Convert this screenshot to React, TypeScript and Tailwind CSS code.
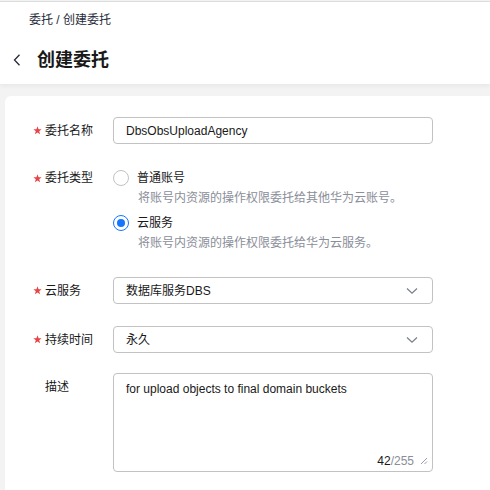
import React from "react";

const font = { fontFamily: '"Liberation Sans", "Noto Sans CJK SC", sans-serif' };

// required mark, drawn as a small red star
const Star = () => (
  <svg width="9" height="9" viewBox="0 0 10 10" className="mr-[3px] shrink-0">
    <path
      d="M5 0.4 L6.2 3.5 L9.6 3.6 L6.9 5.7 L7.9 9.1 L5 7.2 L2.1 9.1 L3.1 5.7 L0.4 3.6 L3.8 3.5 Z"
      fill="#e54545"
    />
  </svg>
);

const Chevron = () => (
  <svg width="12" height="8" viewBox="0 0 12 8" className="shrink-0">
    <path d="M1 1.5 L6 6.2 L11 1.5" fill="none" stroke="#7a7f8a" strokeWidth="1.2" />
  </svg>
);

const Label = ({ text, required = true }: { text: string; required?: boolean }) => (
  <div className="flex w-[108px] shrink-0 items-center pl-[28px] text-[12px] text-[#191919]">
    {required ? <Star /> : <span className="inline-block w-[12px]" />}
    <span>{text}</span>
  </div>
);

const Radio = ({ checked }: { checked?: boolean }) =>
  checked ? (
    <span className="flex size-[16px] shrink-0 items-center justify-center rounded-full border border-[#1476ff]">
      <span className="size-[8px] rounded-full bg-[#1476ff]" />
    </span>
  ) : (
    <span className="size-[16px] shrink-0 rounded-full border border-[#c2c2c2] bg-white" />
  );

export default function App() {
  return (
    <div className="min-h-[490px] w-[490px] overflow-hidden bg-[#f3f3f3]" style={font}>
      <header className="mt-px h-[83px] border-t border-[#dcdcdc] bg-white shadow-[0_2px_4px_rgba(0,0,0,0.05)]">
        <div className="pl-[29px] pt-[9px] text-[12px] leading-[18px] text-[#252b3a]">
          委托 / 创建委托
        </div>
        <div className="mt-[19px] flex items-center">
          <svg width="8" height="12" viewBox="0 0 8 12" className="ml-[13px]">
            <path d="M6.5 0.8 L1.5 6 L6.5 11.2" fill="none" stroke="#252b3a" strokeWidth="1.3" />
          </svg>
          <h1 className="ml-[16px] text-[18px] font-bold leading-[24px] text-[#191919]">创建委托</h1>
        </div>
      </header>

      <main className="ml-[5px] mt-[12px] min-h-[400px] rounded-tl-[6px] bg-white pt-[21px]">
        <div className="flex items-center">
          <Label text="委托名称" />
          <div className="flex h-[27px] w-[320px] items-center rounded-[4px] border border-[#c2c2c2] px-[12px] text-[12px] text-[#191919]">
            DbsObsUploadAgency
          </div>
        </div>

        <div className="mt-[24px] flex">
          <div className="flex h-[20px] items-center">
            <Label text="委托类型" />
          </div>
          <div className="flex flex-col text-[12px]">
            <div className="flex h-[20px] items-center gap-[8px]">
              <Radio />
              <span className="text-[#191919]">普通账号</span>
            </div>
            <div className="h-[20px] pl-[25px] leading-[20px] text-[#8a8e99]">
              将账号内资源的操作权限委托给其他华为云账号。
            </div>
            <div className="mt-[5px] flex h-[20px] items-center gap-[8px]">
              <Radio checked />
              <span className="text-[#191919]">云服务</span>
            </div>
            <div className="h-[20px] pl-[25px] leading-[20px] text-[#8a8e99]">
              将账号内资源的操作权限委托给华为云服务。
            </div>
          </div>
        </div>

        <div className="mt-[24px] flex items-center">
          <Label text="云服务" />
          <div className="flex h-[27px] w-[320px] items-center justify-between rounded-[4px] border border-[#c2c2c2] pl-[12px] pr-[14px] text-[12px] text-[#191919]">
            <span>数据库服务DBS</span>
            <Chevron />
          </div>
        </div>

        <div className="mt-[22px] flex items-center">
          <Label text="持续时间" />
          <div className="flex h-[27px] w-[320px] items-center justify-between rounded-[4px] border border-[#c2c2c2] pl-[12px] pr-[14px] text-[12px] text-[#191919]">
            <span>永久</span>
            <Chevron />
          </div>
        </div>

        <div className="mt-[20px] flex">
          <div className="pt-[6px] leading-[16px]">
            <Label text="描述" required={false} />
          </div>
          <div className="relative h-[99px] w-[320px] rounded-[4px] border border-[#c2c2c2] px-[12px] pt-[7px] text-[12px] leading-[16px] text-[#191919]">
            for upload objects to final domain buckets
            <div className="absolute bottom-[2px] right-[4px] flex items-center gap-[6px] text-[12px] leading-[16px]">
              <span>
                <span className="text-[#191919]">42</span>
                <span className="text-[#8a8e99]">/255</span>
              </span>
              <svg width="8" height="8" viewBox="0 0 8 8">
                <path d="M7 1 L1 7 M7 4.5 L4.5 7" stroke="#9a9ea8" strokeWidth="1" fill="none" />
              </svg>
            </div>
          </div>
        </div>
      </main>
    </div>
  );
}
